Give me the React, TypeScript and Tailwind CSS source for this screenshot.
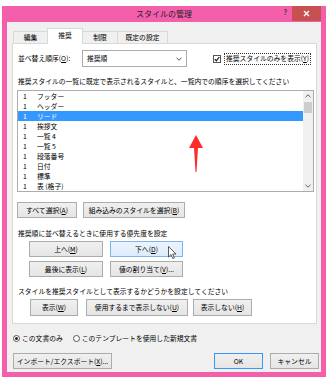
import React from "react";

const U = ({ c }: { c: string }) => (
  <span className="underline underline-offset-[1px] decoration-[0.5px]">{c}</span>
);

function Btn({
  children,
  className = "",
  hover = false,
  def = false,
}: {
  children: React.ReactNode;
  className?: string;
  hover?: boolean;
  def?: boolean;
}) {
  const skin = hover
    ? "border-[#7eb4ea] bg-linear-to-b from-[#ecf4fc] to-[#dcecfc]"
    : def
    ? "border-[#3399ff] bg-linear-to-b from-[#f0f0f0] to-[#e5e5e5]"
    : "border-[#acacac] bg-linear-to-b from-[#f0f0f0] to-[#e5e5e5]";
  return (
    <div
      className={`flex items-center justify-center border text-[6.8px] leading-none whitespace-nowrap ${skin} ${className}`}
    >
      {children}
    </div>
  );
}

const rows = [
  "フッター",
  "ヘッダー",
  "リード",
  "挨拶文",
  "一覧 4",
  "一覧 5",
  "段落番号",
  "日付",
  "標準",
  "表 (格子)",
];

export default function App() {
  return (
    <div className="relative w-[328px] h-[379px] bg-white pt-[6px] pl-[2px] overflow-hidden font-['Noto_Sans_CJK_JP',sans-serif] text-black">
      <div className="w-[324px] h-[371px] bg-[#f35fab] flex flex-col">
        {/* title bar */}
        <div className="h-[16px] grid grid-cols-[1fr_auto_1fr]">
          <div />
          <div className="flex items-center text-[8px] leading-none text-[#222]">スタイルの管理</div>
          <div className="flex justify-end items-start">
            <div className="mt-[3px] mr-[5px] text-[7px] font-bold leading-none text-[#333]">?</div>
            <div className="w-[29px] h-[15px] mr-[5px] bg-[#c75050] flex items-center justify-center">
              <svg width="7" height="7" viewBox="0 0 7 7">
                <path d="M1 1L6 6M6 1L1 6" stroke="white" strokeWidth="1.3" />
              </svg>
            </div>
          </div>
        </div>

        {/* body */}
        <div className="flex-1 mx-[5px] mb-[5px] bg-[#f0f0f0] pt-[6px] pl-[5px] pr-[4px] flex flex-col">
          {/* tabs */}
          <div className="h-[15px] flex items-end ml-[1px] text-[6.8px] leading-none">
            <div className="w-[34px] h-[12px] border-l border-t border-[#d9d9d9] bg-[#f0f0f0] flex items-center justify-center">
              編集
            </div>
            <div className="relative z-10 w-[36px] h-[16px] -mb-px border-l border-t border-r border-[#d9d9d9] bg-white flex items-center justify-center pb-[2px]">
              推奨
            </div>
            <div className="w-[35px] h-[12px] border-t border-r border-[#d9d9d9] bg-[#f0f0f0] flex items-center justify-center">
              制限
            </div>
            <div className="w-[50px] h-[12px] border-t border-r border-[#d9d9d9] bg-[#f0f0f0] flex items-center justify-center">
              既定の設定
            </div>
          </div>

          {/* panel */}
          <div className="h-[281px] border border-[#d9d9d9] bg-white pl-[4px] pr-[2px] pt-[6px] flex flex-col text-[6.8px] leading-none">
            {/* row 1 */}
            <div className="h-[17px] flex items-center">
              <div className="ml-[1px] w-[64px] whitespace-nowrap">
                並べ替え順序(<U c="O" />):
              </div>
              <div className="w-[105px] h-[17px] border border-[#acacac] bg-white flex items-center">
                <span className="ml-[4px] flex-1">推奨順</span>
                <div className="w-[14px] h-full flex items-center justify-center">
                  <svg width="6" height="4" viewBox="0 0 6 4">
                    <path d="M0.5 0.8L3 3.2L5.5 0.8" stroke="#555" strokeWidth="1" fill="none" />
                  </svg>
                </div>
              </div>
              <div className="ml-[26px] w-[8px] h-[8px] border border-[#555] bg-white flex items-center justify-center">
                <svg width="6" height="6" viewBox="0 0 6 6">
                  <path d="M0.8 3.2L2.3 4.8L5.3 1" stroke="#111" strokeWidth="1.2" fill="none" />
                </svg>
              </div>
              <div className="ml-[3px] h-[12px] px-[1px] border border-dotted border-[#333] flex items-center whitespace-nowrap">
                推奨スタイルのみを表示(<U c="Y" />)
              </div>
            </div>

            <div className="mt-[10px] h-[9px] leading-[9px] ml-[1px] whitespace-nowrap">
              推奨スタイルの一覧に既定で表示されるスタイルと、一覧内での順序を選択してください
            </div>

            {/* list box */}
            <div className="mt-[4px] h-[102px] w-[297px] border border-[#acacac] flex">
              <div className="flex-1 flex flex-col">
                {rows.map((r, i) => (
                  <div
                    key={r}
                    className={`h-[10px] flex items-center pl-[5px] whitespace-nowrap ${
                      i === 2 ? "bg-[#3399ff] text-white" : ""
                    }`}
                  >
                    <span className="w-[14px]">1</span>
                    <span>{r}</span>
                  </div>
                ))}
              </div>
              <div className="w-[10px] bg-[#f0f0f0] flex flex-col">
                <div className="h-[10px] flex items-center justify-center">
                  <svg width="6" height="4" viewBox="0 0 6 4">
                    <path d="M0.5 3.2L3 0.8L5.5 3.2" stroke="#606060" strokeWidth="1" fill="none" />
                  </svg>
                </div>
                <div className="h-[11px] mx-[1px] mt-[1px] bg-[#cdcdcd]" />
                <div className="flex-1" />
                <div className="h-[10px] flex items-center justify-center">
                  <svg width="6" height="4" viewBox="0 0 6 4">
                    <path d="M0.5 0.8L3 3.2L5.5 0.8" stroke="#606060" strokeWidth="1" fill="none" />
                  </svg>
                </div>
              </div>
            </div>

            <div className="mt-[10px] h-[16px] flex gap-[6px]">
              <Btn className="w-[60px]">
                すべて選択(<U c="A" />)
              </Btn>
              <Btn className="w-[102px]">
                組み込みのスタイルを選択(<U c="B" />)
              </Btn>
            </div>

            <div className="mt-[11px] h-[9px] leading-[9px] ml-[1px] whitespace-nowrap">
              推奨順に並べ替えるときに使用する優先度を設定
            </div>

            <div className="mt-[3px] h-[16px] ml-[12px] flex gap-[7px]">
              <Btn className="w-[74px]">
                上へ(<U c="M" />)
              </Btn>
              <Btn className="w-[73px]" hover>
                下へ(<U c="D" />)
              </Btn>
            </div>
            <div className="mt-[4px] h-[16px] ml-[12px] flex gap-[7px]">
              <Btn className="w-[74px]">
                最後に表示(<U c="L" />)
              </Btn>
              <Btn className="w-[73px]">
                値の割り当て(<U c="V" />)...
              </Btn>
            </div>

            <div className="mt-[10px] h-[9px] leading-[9px] ml-[1px] whitespace-nowrap">
              スタイルを推奨スタイルとして表示するかどうかを設定してください
            </div>

            <div className="mt-[3px] h-[17px] ml-[13px] flex">
              <Btn className="w-[48px]">
                表示(<U c="W" />)
              </Btn>
              <Btn className="w-[102px] ml-[8px]">
                使用するまで表示しない(<U c="U" />)
              </Btn>
              <Btn className="w-[59px] ml-[5px]">
                表示しない(<U c="H" />)
              </Btn>
            </div>
          </div>

          {/* radios */}
          <div className="mt-[9px] h-[10px] flex items-center ml-[1px] text-[6.8px] leading-none whitespace-nowrap">
            <div className="w-[7px] h-[7px] rounded-full border border-[#555] bg-white flex items-center justify-center">
              <div className="w-[3px] h-[3px] rounded-full bg-[#222]" />
            </div>
            <span className="ml-[2px]">この文書のみ</span>
            <div className="ml-[10px] w-[7px] h-[7px] rounded-full border border-[#555] bg-white" />
            <span className="ml-[2px]">このテンプレートを使用した新規文書</span>
          </div>

          {/* bottom buttons */}
          <div className="mt-[10px] h-[16px] flex ml-[1px] -mr-[2px]">
            <Btn className="w-[99px]">
              インポート/エクスポート(<U c="X" />)...
            </Btn>
            <div className="flex-1" />
            <Btn className="w-[49px]" def>
              OK
            </Btn>
            <Btn className="w-[49px] ml-[7px]">キャンセル</Btn>
          </div>
        </div>
      </div>

      {/* red arrow annotation */}
      <svg className="absolute left-[188px] top-[134px]" width="16" height="40" viewBox="0 0 16 40">
        <polygon points="8,1 15,14 10,14 8.5,38 7.5,38 6,14 1,14" fill="#ff2b2b" />
      </svg>

      {/* mouse cursor */}
      <svg className="absolute left-[168px] top-[246px]" width="10" height="14" viewBox="0 0 10 14">
        <path d="M0.5 0.5 L0.5 11 L3 8.6 L4.8 12.6 L6.4 11.9 L4.7 8 L8 8 Z" fill="white" stroke="#333" strokeWidth="0.8" />
      </svg>
    </div>
  );
}
